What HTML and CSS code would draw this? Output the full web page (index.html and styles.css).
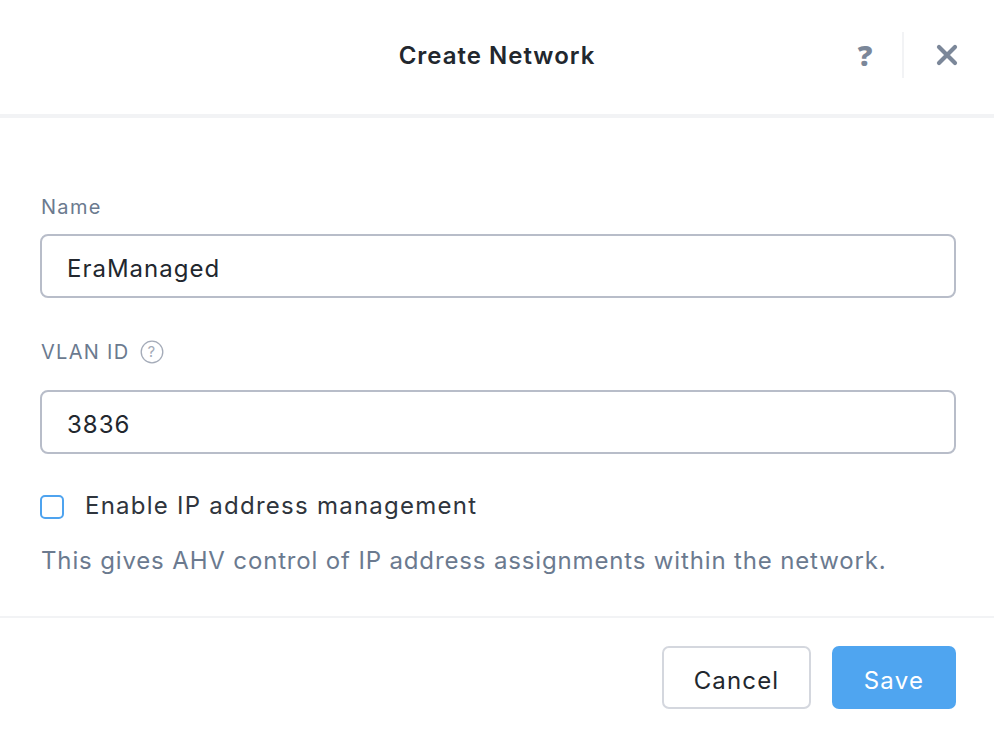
FILE: index.html
```html
<!DOCTYPE html>
<html>
<head>
<meta charset="utf-8">
<link rel="stylesheet" href="styles.css">
</head>
<body>
<div class="dialog">
  <header class="header">
    <div class="spacer"></div>
    <h1 class="title">Create Network</h1>
    <div class="actions">
      <button class="icon-btn help" aria-label="Help">?</button>
      <span class="divider"></span>
      <button class="icon-btn close" aria-label="Close">
        <svg width="22" height="22" viewBox="0 0 22 22"><path d="M3 3 L19 19 M19 3 L3 19" stroke="#7b8799" stroke-width="4.2" stroke-linecap="round" fill="none"/></svg>
      </button>
    </div>
  </header>
  <main class="body">
    <div class="field field-name">
      <label class="label">Name</label>
      <div class="input">EraManaged</div>
    </div>
    <div class="field field-vlan">
      <label class="label">VLAN ID
        <svg class="qicon" width="24" height="24" viewBox="0 0 24 24"><circle cx="12" cy="12" r="10.8" stroke="#a4abb8" stroke-width="1.3" fill="none"/><text x="12" y="17" text-anchor="middle" font-size="15" fill="#a4abb8" font-family="Inter, sans-serif">?</text></svg>
      </label>
      <div class="input">3836</div>
    </div>
    <div class="check-row">
      <span class="checkbox"></span>
      <span class="check-label">Enable IP address management</span>
    </div>
    <p class="desc">This gives AHV control of IP address assignments within the network.</p>
  </main>
  <footer class="footer">
    <button class="btn btn-cancel">Cancel</button>
    <button class="btn btn-save">Save</button>
  </footer>
</div>
</body>
</html>
```
FILE: styles.css
```css
* { box-sizing: border-box; }
html, body { margin: 0; padding: 0; background: #fff; }
body { font-family: Inter, "Open Sans", sans-serif; color: #22272e; }
.dialog { width: 994px; height: 736px; display: flex; flex-direction: column; }
.header {
  height: 118px;
  border-bottom: 4px solid #f2f3f5;
  display: grid;
  grid-template-columns: 1fr auto 1fr;
  align-items: center;
  padding-bottom: 4px;
}
.title { margin: 0; font-size: 24px; font-weight: 600; color: #22272e; letter-spacing: 1px; }
.actions { display: flex; justify-content: flex-end; align-items: center; padding-right: 36px; }
.icon-btn { background: none; border: none; padding: 0; cursor: pointer; display: flex; align-items: center; justify-content: center; }
.help { font-family: "Open Sans", sans-serif; font-weight: 800; font-size: 29px; color: #7b8799; width: 24px; height: 32px; line-height: 32px; }
.divider { width: 2px; height: 46px; background: #f2f3f5; margin: 0 32px 0 25px; }
.close { width: 22px; height: 22px; }
.body { flex: 1; padding: 77px 38px 0 40px; border-bottom: 2px solid #f2f3f5; }
.field { display: flex; flex-direction: column; }
.label { font-size: 20px; line-height: 24px; color: #6b7a8f; display: flex; align-items: center; gap: 10px; padding-left: 1px; letter-spacing: 1.3px; }
.field-name .label { margin-bottom: 15px; }
.field-vlan { margin-top: 42px; }
.field-vlan .label { margin-bottom: 26px; }
.qicon { display: block; }
.input {
  height: 64px;
  border: 2px solid #b8bdc9;
  border-radius: 8px;
  padding: 3px 25px 0;
  font-size: 24px;
  line-height: 59px;
  color: #22272e;
  letter-spacing: 1px;
}
.check-row { display: flex; align-items: center; margin-top: 41px; height: 24px; }
.checkbox { width: 24px; height: 24px; border: 2px solid #4ea3ef; border-radius: 5px; margin-right: 21px; flex: none; }
.check-label { font-size: 24px; color: #2f353d; letter-spacing: 1.25px; margin-top: -3px; }
.desc { margin: 26px 0 0 1px; font-size: 24px; line-height: 32px; color: #6b7a8f; letter-spacing: 0.85px; }
.footer { height: 118px; flex: none; display: flex; justify-content: flex-end; align-items: flex-start; padding: 28px 38px 0 0; gap: 21px; }
.btn { height: 63px; border-radius: 7px; font-family: inherit; font-size: 24px; cursor: pointer; padding: 5px 0 0; letter-spacing: 1.15px; }
.btn-cancel { width: 149px; background: #fff; border: 2px solid #d4d7de; color: #22272e; }
.btn-save { width: 124px; background: #4fa5f0; border: none; color: #fff; letter-spacing: 1.25px; }
```
